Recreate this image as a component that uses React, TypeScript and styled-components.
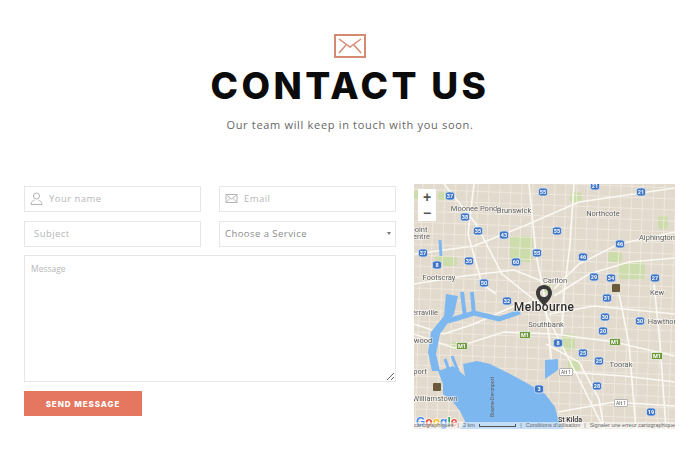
import React from 'react';
import styled, { createGlobalStyle } from 'styled-components';

const GlobalStyle = createGlobalStyle`
  html, body {
    margin: 0;
    padding: 0;
    background: #ffffff;
    font-family: 'Open Sans', 'Liberation Sans', sans-serif;
  }
`;

const Page = styled.div`
  width: 700px;
  height: 470px;
  overflow: hidden;
`;

const Header = styled.header`
  display: flex;
  flex-direction: column;
  align-items: center;
  padding-top: 34px;
`;

const Title = styled.h1`
  margin: 7px 0 0;
  font-family: 'Inter', 'Liberation Sans', sans-serif;
  font-size: 37px;
  line-height: 42px;
  font-weight: 800;
  letter-spacing: 3.4px;
  color: #0b0b0b;
`;

const Subtitle = styled.p`
  margin: 9px 0 0;
  font-size: 11px;
  line-height: 18px;
  letter-spacing: 0.68px;
  color: #666666;
`;

const Main = styled.main`
  display: grid;
  grid-template-columns: 372px 261px;
  column-gap: 18px;
  padding: 0 24px;
  margin-top: 50px;
`;

const Form = styled.form`
  display: grid;
  grid-template-columns: 177px 177px;
  column-gap: 18px;
  grid-auto-rows: min-content;
  row-gap: 9px;
  padding-top: 1px;
`;

const FieldWrap = styled.label`
  position: relative;
  display: block;
  height: 26px;
`;

const FieldIcon = styled.svg`
  position: absolute;
  left: 6px;
  top: 7px;
  width: 13px;
  height: 13px;
  fill: none;
  stroke: #b4b4b4;
  stroke-width: 1;
`;

const Input = styled.input<{ $indent?: boolean }>`
  box-sizing: border-box;
  width: 100%;
  height: 26px;
  padding: 0 6px 0 ${(p) => (p.$indent ? '24px' : '9px')};
  border: 1px solid #e6e6e6;
  outline: none;
  font-family: inherit;
  font-size: 9.5px;
  letter-spacing: 0.45px;
  &::placeholder {
    color: #b7b7b7;
    opacity: 1;
  }
`;

const Select = styled.select`
  box-sizing: border-box;
  width: 100%;
  height: 26px;
  padding: 0 5px;
  border: 1px solid #e6e6e6;
  border-radius: 0;
  outline: none;
  appearance: none;
  background: #ffffff;
  font-family: inherit;
  font-size: 9.5px;
  letter-spacing: 0.45px;
  color: #8c8c8c;
`;

const SelectCaret = styled.span`
  position: absolute;
  right: 5px;
  top: 12px;
  border-left: 2px solid transparent;
  border-right: 2px solid transparent;
  border-top: 3px solid #777777;
`;

const Message = styled.textarea`
  grid-column: 1 / -1;
  box-sizing: border-box;
  display: block;
  width: 100%;
  height: 127px;
  padding: 7px 6px;
  border: 1px solid #e6e6e6;
  outline: none;
  font-family: inherit;
  font-size: 8.5px;
  &::placeholder {
    color: #b7b7b7;
    opacity: 1;
  }
`;

const SendButton = styled.button`
  grid-column: 1 / -1;
  width: 118px;
  height: 25px;
  border: 0;
  padding: 0;
  background: #e5765f;
  color: #ffffff;
  font-family: 'Inter', 'Liberation Sans', sans-serif;
  font-size: 8px;
  font-weight: 800;
  letter-spacing: 0.95px;
`;

const MapBox = styled.div`
  position: relative;
  width: 261px;
  height: 245px;
  overflow: hidden;
  background: #e3dace;
`;

const MapSvg = styled.svg`
  display: block;
  width: 261px;
  height: 245px;
  filter: blur(0.35px);
`;

const ZoomControl = styled.div`
  position: absolute;
  left: 4px;
  top: 5px;
  width: 18px;
  display: flex;
  flex-direction: column;
  background: #ffffff;
`;

const ZoomButton = styled.span`
  height: 16px;
  display: flex;
  align-items: center;
  justify-content: center;
  font-family: 'Liberation Sans', sans-serif;
  font-size: 14px;
  font-weight: 700;
  line-height: 16px;
  color: #555555;
`;

const Attribution = styled.div`
  position: absolute;
  left: 0;
  right: 0;
  bottom: 0;
  height: 7px;
  display: flex;
  align-items: center;
  gap: 4px;
  overflow: hidden;
  white-space: nowrap;
  background: rgba(255, 255, 255, 0.55);
  font-family: 'Liberation Sans', sans-serif;
  font-size: 5.5px;
  line-height: 7px;
  color: #666666;
`;

const ScaleBar = styled.span`
  display: inline-block;
  width: 36px;
  height: 2px;
  border: 1px solid #555555;
  border-top: 0;
`;

const Road = styled.path`
  fill: none;
  stroke: #fbf9f4;
  stroke-width: 1.6;
`;

const MinorRoad = styled.line`
  stroke: #f0ebe2;
  stroke-width: 0.8;
`;

const Water = styled.path`
  fill: #7cb7f0;
`;

const Channel = styled.path<{ $w: number }>`
  fill: none;
  stroke: #7cb7f0;
  stroke-width: ${(p) => p.$w};
`;

const Park = styled.rect`
  fill: #cddcab;
`;

const Place = styled.text<{ $size?: number; $strong?: boolean }>`
  font-family: 'Roboto', 'Liberation Sans', sans-serif;
  font-size: ${(p) => p.$size ?? 7.5}px;
  font-weight: ${(p) => (p.$strong ? 500 : 400)};
  letter-spacing: ${(p) => (p.$size === 12 ? '0.3px' : '0')};
  text-anchor: middle;
  fill: ${(p) => (p.$strong ? '#2b2b2b' : '#5d5d58')};
  stroke: #ffffffaa;
  stroke-width: 1.4;
  paint-order: stroke;
`;

const RoadName = styled.text`
  font-family: 'Roboto', 'Liberation Sans', sans-serif;
  font-size: 5px;
  text-anchor: middle;
  fill: #5f5b54;
`;

const ShieldText = styled.text`
  font-family: 'Roboto', 'Liberation Sans', sans-serif;
  font-size: 5.5px;
  font-weight: 700;
  text-anchor: middle;
  fill: #ffffff;
`;

const GoogleLetter = styled.tspan<{ $c: string }>`
  fill: ${(p) => p.$c};
`;

const GoogleMark = styled.text`
  font-family: 'Liberation Sans', sans-serif;
  font-size: 12px;
  font-weight: 700;
  stroke: #ffffffcc;
  stroke-width: 1.4;
  paint-order: stroke;
`;

const places: [string, number, number, number?, boolean?][] = [
  ['Moonee Ponds', 62, 27],
  ['Brunswick', 100, 29],
  ['Northcote', 189, 32],
  ['Alphington', 243, 56],
  ['point', 5, 48],
  ['Centre', 5, 55],
  ['Footscray', 25, 96],
  ['Carlton', 141, 99],
  ['Kew', 243, 111],
  ['erraville', 11, 131],
  ['Hawthorn', 250, 140],
  ['wood', 9, 159],
  ['Southbank', 132, 143],
  ['Toorak', 207, 183],
  ['port', 6, 190],
  ['Williamstown', 21, 217],
  ['St Kilda', 156, 238, 7, true],
  ['Melbourne', 130, 127, 12, true],
];

const shields: [string, number, number][] = [
  ['37', 36, 12], ['38', 51, 33], ['35', 64, 47], ['43', 90, 51], ['37', 9, 69],
  ['8', 23, 81], ['35', 55, 77], ['60', 102, 78], ['55', 123, 69], ['50', 70, 99],
  ['32', 93, 117], ['55', 129, 8], ['21', 181, 2], ['21', 227, 8], ['55', 143, 47],
  ['46', 206, 60], ['46', 169, 73], ['29', 180, 93], ['34', 197, 94], ['27', 241, 94],
  ['31', 193, 114], ['30', 191, 133], ['30', 226, 137], ['20', 189, 147], ['8', 144, 159],
  ['25', 169, 169], ['25', 185, 177], ['28', 183, 202], ['19', 237, 228], ['3', 125, 205],
];

const parks: [number, number, number, number][] = [
  [96, 52, 23, 26], [156, 8, 12, 10], [244, 32, 10, 13], [194, 68, 14, 10],
  [204, 78, 27, 17], [148, 150, 13, 17], [154, 175, 12, 12], [34, 158, 12, 7],
  [21, 72, 22, 10], [0, 6, 8, 10], [24, 8, 12, 8], [130, 100, 7, 10],
];

const motorways: [number, number][] = [[111, 151], [48, 162], [201, 158], [243, 172]];
const altRoutes: [number, number][] = [[152, 188], [207, 219]];

const mainRoads = [
  'M0 70 L60 62 L110 42 L165 18 L261 4',
  'M30 0 L62 40 L88 90 L128 122 L170 205 L190 245',
  'M115 0 L122 70 L130 110 L138 180',
  'M160 0 L156 60 L150 110 L148 150',
  'M261 48 L205 60 L165 80 L140 105',
  'M261 74 L215 78 L175 90 L140 112',
  'M0 140 L30 150 L60 140 L100 122 L130 115',
  'M0 150 L40 164 L90 148 L140 150 L200 158 L261 172',
  'M135 130 L180 122 L261 130',
  'M60 0 L54 50 L68 100 L82 110',
  'M0 100 L50 92 L100 86 L135 100',
  'M152 188 L210 192 L261 198',
  'M144 228 L200 218 L261 222',
  'M205 110 L215 160 L222 245',
  'M240 100 L246 160 L252 245',
  'M132 160 L165 178 L185 215 L190 245',
];

const minorX = Array.from({ length: 26 }, (_, i) => i * 11 - 8);
const minorY = Array.from({ length: 24 }, (_, i) => i * 11 - 6);

const MailGlyph = () => (
  <svg width="32" height="24" viewBox="0 0 32 24" fill="none" stroke="#d58a72" aria-hidden>
    <rect x="1" y="1" width="30" height="22" strokeWidth="2" />
    <path d="M5 5 L16 13 L27 5" strokeWidth="1.5" />
    <path d="M5 19 L12 11 M27 19 L20 11" strokeWidth="1.5" />
  </svg>
);

const CityMap = () => (
  <MapSvg viewBox="0 0 261 245" aria-label="Melbourne">
    <rect width="261" height="245" fill="#e3dace" />
    {parks.map(([x, y, w, h]) => (
      <Park key={`${x}-${y}`} x={x} y={y} width={w} height={h} rx={3} />
    ))}
    {minorX.map((x) => (
      <MinorRoad key={x} x1={x + 6} y1={0} x2={x - 2} y2={245} />
    ))}
    {minorY.map((y) => (
      <MinorRoad key={y} x1={0} y1={y} x2={261} y2={y + 10} />
    ))}
    {mainRoads.map((d) => (
      <Road key={d} d={d} />
    ))}
    <Channel $w={3} d="M26 56 L27 72" />
    <Water d="M32 110 L44 112 L40 130 L36 136 L26 150 L22 170 L26 187 L18 187 L14 168 L17 148 L30 132 Z" />
    <Channel $w={5} d="M34 137 L60 129 L85 135 L106 128" />
    <Channel $w={4} d="M48 108 L51 133" />
    <Channel $w={4} d="M58 108 L60 131" />
    <Channel $w={3} d="M31 175 L38 195" />
    <Channel $w={3} d="M38 172 L46 192" />
    <Water d="M24 187 L29 200 L29 210 L39 218 L46 227 L51 237 L46 245 L150 245 L144 235 L141 223 L131 210 L111 198 L96 190 L76 180 L63 177 L49 180 L51 192 L39 182 Z" />
    <Water d="M131 176 L144 175 L144 186 L131 195 Z" />
    <RoadName transform="translate(80 213) rotate(-90)">Bourne-Devonport</RoadName>
    {places.map(([name, x, y, size, strong]) => (
      <Place key={name} x={x} y={y} $size={size} $strong={strong}>
        {name}
      </Place>
    ))}
    {shields.map(([n, x, y]) => (
      <g key={`${x}-${y}`}>
        <rect x={x - 4.5} y={y - 4} width={9} height={8} rx={2.5} fill="#3f74c4" stroke="#d6e6f7" strokeWidth={0.8} />
        <ShieldText x={x} y={y + 2}>{n}</ShieldText>
      </g>
    ))}
    {motorways.map(([x, y]) => (
      <g key={`${x}-${y}`}>
        <rect x={x - 5.5} y={y - 3.5} width={11} height={7} fill="#6f9a3d" stroke="#ffffff" strokeWidth={0.6} />
        <ShieldText x={x} y={y + 2}>M1</ShieldText>
      </g>
    ))}
    {altRoutes.map(([x, y]) => (
      <g key={`${x}-${y}`}>
        <rect x={x - 6.5} y={y - 3.5} width={13} height={7} rx={1} fill="#ffffff" stroke="#777777" strokeWidth={0.5} />
        <RoadName x={x} y={y + 1.7}>Alt 1</RoadName>
      </g>
    ))}
    <rect x={198} y={100} width={8} height={8} rx={1} fill="#6b5a3a" />
    <rect x={19} y={199} width={8} height={8} rx={1} fill="#6b5a3a" />
    <path
      d="M130 101 C125 101 122 105 122 109 C122 114 127 118 130 122 C133 118 138 114 138 109 C138 105 135 101 130 101 Z M130 105 A4 4 0 1 1 130 113 A4 4 0 1 1 130 105 Z"
      fill="#3a3a3a"
      fillRule="evenodd"
    />
    <GoogleMark x={2} y={242}>
      <GoogleLetter $c="#4285f4">G</GoogleLetter>
      <GoogleLetter $c="#ea4335">o</GoogleLetter>
      <GoogleLetter $c="#fbbc05">o</GoogleLetter>
      <GoogleLetter $c="#4285f4">g</GoogleLetter>
      <GoogleLetter $c="#34a853">l</GoogleLetter>
      <GoogleLetter $c="#ea4335">e</GoogleLetter>
    </GoogleMark>
  </MapSvg>
);

const App = () => (
  <Page>
    <GlobalStyle />
    <Header>
      <MailGlyph />
      <Title>CONTACT US</Title>
      <Subtitle>Our team will keep in touch with you soon.</Subtitle>
    </Header>
    <Main>
      <Form>
        <FieldWrap>
          <FieldIcon viewBox="0 0 13 13">
            <circle cx="6.5" cy="4" r="3" />
            <path d="M1 12.5 C1 9.5 3.5 8.5 4.5 8 M12 12.5 C12 9.5 9.5 8.5 8.5 8 M1 12.5 H12" />
          </FieldIcon>
          <Input $indent placeholder="Your name" />
        </FieldWrap>
        <FieldWrap>
          <FieldIcon viewBox="0 0 13 13">
            <rect x="1" y="2.5" width="11" height="8" />
            <path d="M2 3.5 L6.5 7 L11 3.5 M2 9.5 L5 6.5 M11 9.5 L8 6.5" />
          </FieldIcon>
          <Input $indent placeholder="Email" />
        </FieldWrap>
        <FieldWrap>
          <Input placeholder="Subject" />
        </FieldWrap>
        <FieldWrap>
          <Select defaultValue="">
            <option value="">Choose a Service</option>
          </Select>
          <SelectCaret />
        </FieldWrap>
        <Message placeholder="Message" />
        <SendButton type="button">SEND MESSAGE</SendButton>
      </Form>
      <MapBox>
        <CityMap />
        <ZoomControl>
          <ZoomButton>+</ZoomButton>
          <ZoomButton>−</ZoomButton>
        </ZoomControl>
        <Attribution>
          <span>cartographiques</span>
          <span>|</span>
          <span>2 km</span>
          <ScaleBar />
          <span>|</span>
          <span>Conditions d'utilisation</span>
          <span>|</span>
          <span>Signaler une erreur cartographique</span>
        </Attribution>
      </MapBox>
    </Main>
  </Page>
);

export default App;
